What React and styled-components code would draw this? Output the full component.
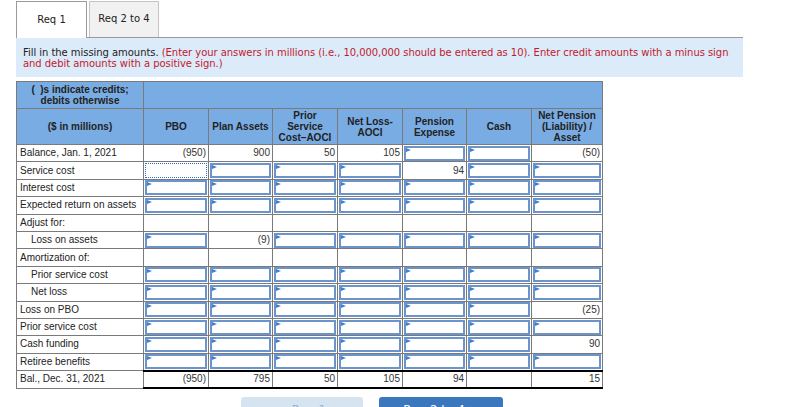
import React from "react";
import styled, { createGlobalStyle } from "styled-components";

const GlobalStyle = createGlobalStyle`
  body {
    margin: 0;
    background: #fff;
    font-family: "Liberation Sans", Arial, sans-serif;
    color: #222;
  }
`;

const Page = styled.div`
  width: 727px;
  padding: 1px 0 0 16px;
`;

const Tabs = styled.div`
  display: flex;
  gap: 2px;
  border-bottom: 1px solid #9a9a9a;
  height: 36px;
`;

const Tab = styled.div`
  width: ${(p) => p.$w}px;
  height: ${(p) => (p.$active ? 37 : 36)}px;
  box-sizing: border-box;
  display: flex;
  align-items: center;
  justify-content: center;
  font-family: "DejaVu Sans", Verdana, sans-serif;
  font-size: 10px;
  color: #222;
  background: ${(p) => (p.$active ? "#fff" : "#f1f1f1")};
  border: 1px solid ${(p) => (p.$active ? "#9a9a9a" : "#c4c4c4")};
  border-bottom: none;
  padding-bottom: 2px;
`;

const Instructions = styled.div`
  background: #dcebf9;
  padding: 9px 7px 8px 7px;
  font-family: "DejaVu Sans", Verdana, sans-serif;
  font-size: 10px;
  line-height: 11px;
  letter-spacing: -0.05px;
  color: #222;
`;

const Red = styled.span`
  color: #c21a2c;
`;

const Grid = styled.table`
  margin-top: 4px;
  border-collapse: collapse;
  table-layout: fixed;
  width: 586px;
  font-size: 10px;
`;

const HeadCell = styled.th`
  background: #79ace3;
  border: 1px solid #7a7a7a;
  font-weight: bold;
  font-size: 10px;
  line-height: 11px;
  color: #222;
  text-align: center;
  vertical-align: middle;
  padding: 0 2px;
  height: ${(p) => p.$h}px;
`;

const Row = styled.tr`
  height: ${(p) => (p.$total ? 17.5 : 17.4)}px;
`;

const Label = styled.td`
  border: 1px solid #7a7a7a;
  padding: 0 0 0 ${(p) => (p.$indent ? 14 : 3)}px;
  white-space: nowrap;
  color: #222;
  font-size: 10px;
  line-height: 12px;
`;

const Cell = styled.td`
  border: 1px solid #7a7a7a;
  border-top: ${(p) => (p.$total ? "2px solid #000" : "1px solid #7a7a7a")};
  border-bottom: ${(p) => (p.$total ? "2px solid #000" : "1px solid #7a7a7a")};
  padding: ${(p) => (p.$input ? "0 1px" : "0 2px 0 0")};
  text-align: right;
  color: #333;
  line-height: 12px;
`;

const Field = styled.div`
  position: relative;
  height: 15px;
  box-sizing: border-box;
  border: ${(p) => (p.$focus ? "1px dotted #2f6fc0" : "2px solid #6a94cb")};
  background: #fff;

  &::before {
    content: "";
    display: ${(p) => (p.$focus ? "none" : "block")};
    position: absolute;
    left: 0;
    top: 0;
    border-top: 2px solid transparent;
    border-bottom: 2px solid transparent;
    border-left: 5px solid #3f7fcd;
  }
`;

const Nav = styled.div`
  display: flex;
  gap: 16px;
  margin: 8px 0 0 225px;
`;

const NavButton = styled.div`
  width: ${(p) => p.$w}px;
  height: 30px;
  border-radius: 3px;
  background: ${(p) => (p.$primary ? "#3a77bd" : "#d6e3f1")};
  color: ${(p) => (p.$primary ? "#fff" : "#9bb3cf")};
  font-family: "DejaVu Sans", Verdana, sans-serif;
  font-size: 12px;
  display: flex;
  justify-content: center;
  padding-top: 6px;
  box-sizing: border-box;
`;

const I = "__input";
const F = "__focus";
const all = (v) => Array(7).fill(v);

const rows = [
  { label: "Balance, Jan. 1, 2021", cells: ["(950)", "900", "50", "105", I, I, "(50)"] },
  { label: "Service cost", cells: [F, I, I, I, "94", I, I] },
  { label: "Interest cost", cells: all(I) },
  { label: "Expected return on assets", cells: all(I) },
  { label: "Adjust for:", cells: all("") },
  { label: "Loss on assets", indent: true, cells: [I, "(9)", I, I, I, I, I] },
  { label: "Amortization of:", cells: all("") },
  { label: "Prior service cost", indent: true, cells: all(I) },
  { label: "Net loss", indent: true, cells: all(I) },
  { label: "Loss on PBO", cells: [I, I, I, I, I, I, "(25)"] },
  { label: "Prior service cost", cells: all(I) },
  { label: "Cash funding", cells: [I, I, I, I, I, I, "90"] },
  { label: "Retiree benefits", cells: all(I) },
  { label: "Bal., Dec. 31, 2021", total: true, cells: ["(950)", "795", "50", "105", "94", "", "15"] },
];

const colWidths = [127, 65, 64, 65, 65, 64, 65, 71];

const heads = [
  "PBO",
  "Plan Assets",
  <>Prior<br />Service<br />Cost–AOCI</>,
  <>Net Loss-<br />AOCI</>,
  <>Pension<br />Expense</>,
  "Cash",
  <>Net Pension<br />(Liability) /<br />Asset</>,
];

const App = () => {
  return (
    <Page>
      <GlobalStyle />
      <Tabs>
        <Tab $active $w={71}>Req 1</Tab>
        <Tab $w={70}>Req 2 to 4</Tab>
      </Tabs>
      <Instructions>
        Fill in the missing amounts.{" "}
        <Red>
          (Enter your answers in millions (i.e., 10,000,000 should be entered as 10). Enter credit amounts with a minus sign
          <br />
          and debit amounts with a positive sign.)
        </Red>
      </Instructions>

      <Grid>
        <colgroup>
          {colWidths.map((w, i) => (
            <col key={i} style={{ width: w }} />
          ))}
        </colgroup>
        <thead>
          <tr>
            <HeadCell $h={26}>
              (&nbsp;&nbsp;)s indicate credits;
              <br />
              debits otherwise
            </HeadCell>
            <HeadCell colSpan={7} />
          </tr>
          <tr>
            <HeadCell $h={35}>($ in millions)</HeadCell>
            {heads.map((h, i) => (
              <HeadCell key={i}>{h}</HeadCell>
            ))}
          </tr>
        </thead>
        <tbody>
          {rows.map((r, i) => (
            <Row key={i} $total={r.total}>
              <Label $indent={r.indent}>{r.label}</Label>
              {r.cells.map((c, j) =>
                c === I || c === F ? (
                  <Cell key={j} $input>
                    <Field $focus={c === F} />
                  </Cell>
                ) : (
                  <Cell key={j} $total={r.total}>
                    {c}
                  </Cell>
                )
              )}
            </Row>
          ))}
        </tbody>
      </Grid>

      <Nav>
        <NavButton $w={122}>&lt; Req 1</NavButton>
        <NavButton $primary $w={124}>Req 2 to 4 &gt;</NavButton>
      </Nav>
    </Page>
  );
};

export default App;
